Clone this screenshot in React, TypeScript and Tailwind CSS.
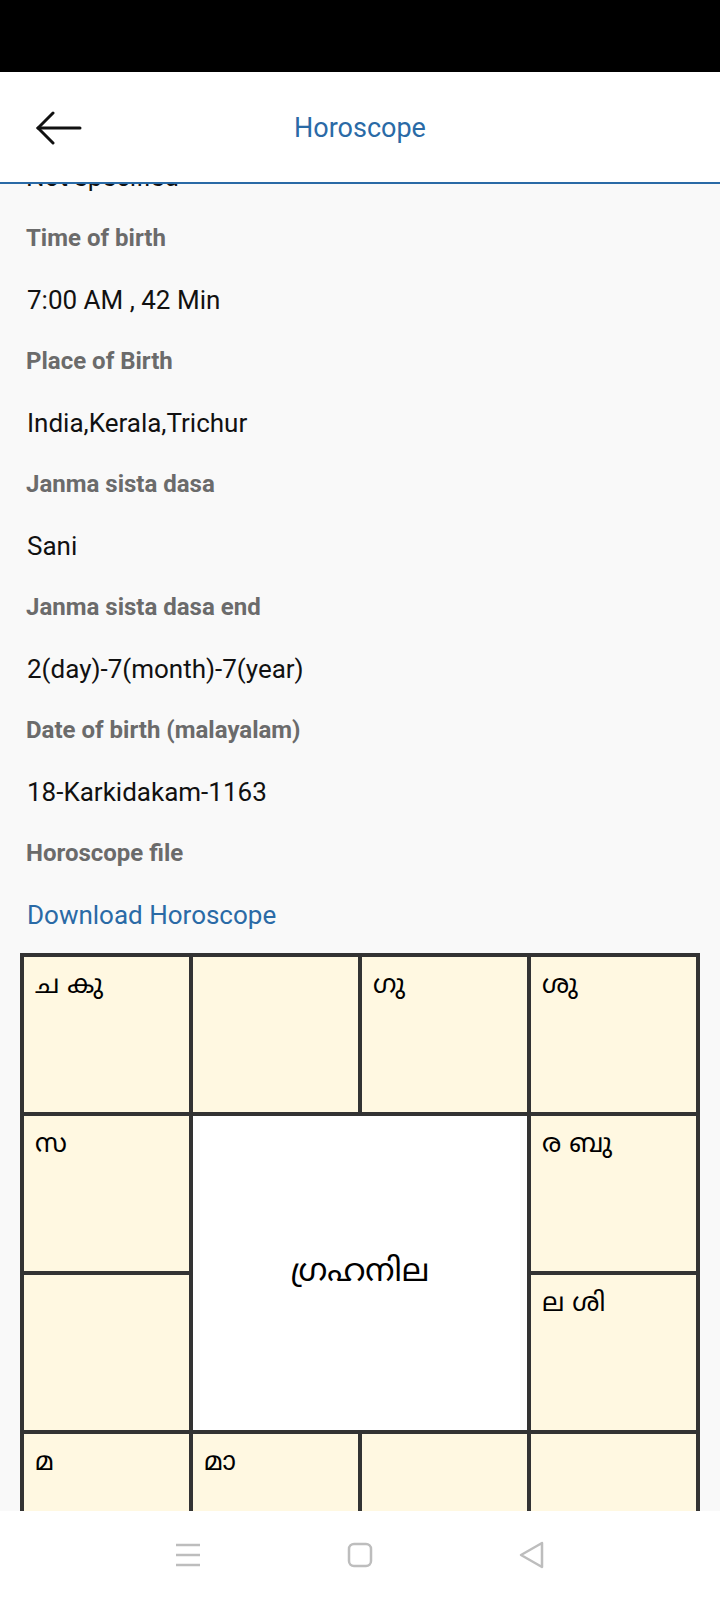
import React from "react";

const details = [
  { label: "Time of birth", value: "7:00 AM , 42 Min" },
  { label: "Place of Birth", value: "India,Kerala,Trichur" },
  { label: "Janma sista dasa", value: "Sani" },
  { label: "Janma sista dasa end", value: "2(day)-7(month)-7(year)" },
  { label: "Date of birth (malayalam)", value: "18-Karkidakam-1163" },
];

const ml = { fontFamily: '"Noto Sans Malayalam", "Noto Sans", "DejaVu Sans", sans-serif' };

function Cell({ text }: { text?: string }) {
  return (
    <div className="h-[155px] bg-[#fff8e1] pl-[11px] pt-[13px] text-[26px] leading-[34px] text-black" style={ml}>
      {text}
    </div>
  );
}

export default function App() {
  return (
    <div className="flex h-[1600px] w-[720px] flex-col overflow-hidden bg-[#f9f9f9] font-['Roboto',sans-serif]">
      {/* status bar */}
      <div className="h-[72px] shrink-0 bg-black" />

      {/* header */}
      <div className="relative z-10 flex h-[112px] shrink-0 items-center border-b-2 border-[#2a6aa6] bg-white pt-[2px]">
        <button className="absolute left-[36px] top-[39px]">
          <svg width="46" height="34" viewBox="0 0 46 34" fill="none" stroke="#111" strokeWidth="3" strokeLinecap="round">
            <path d="M2 17 H44" />
            <path d="M17 2 L2 17 L17 32" strokeLinejoin="miter" />
          </svg>
        </button>
        <h1 className="w-full text-center text-[27px] font-normal text-[#2a6aa6]">Horoscope</h1>
      </div>

      {/* content */}
      <div className="flex-1 overflow-hidden">
        <div className="-mt-[38px] pl-[26px] text-[26px] leading-[62px] text-[#111]">Not specified</div>
        {details.map((d) => (
          <div key={d.label}>
            <div className="pl-[26px] text-[24px] font-bold leading-[61px] text-[#6b6b6b]">{d.label}</div>
            <div className="pl-[27px] text-[26px] leading-[62px] text-[#111]">{d.value}</div>
          </div>
        ))}
        <div className="pl-[26px] text-[24px] font-bold leading-[61px] text-[#6b6b6b]">Horoscope file</div>
        <div className="pl-[27px] text-[26px] leading-[62px] text-[#2a6aa6]">Download Horoscope</div>

        {/* rasi chart */}
        <div className="ml-[20px] mt-[7px] grid w-[680px] grid-cols-4 gap-[4px] bg-[#333] p-[4px]">
          <Cell text="ച കു" />
          <Cell />
          <Cell text="ഗു" />
          <Cell text="ശു" />
          <Cell text="സ" />
          <div
            className="col-span-2 row-span-2 flex items-center justify-center bg-white text-[32px] text-black"
            style={ml}
          >
            ഗ്രഹനില
          </div>
          <Cell text="ര ബു" />
          <Cell />
          <Cell text="ല ശി" />
          <Cell text="മ" />
          <Cell text="മാ" />
          <Cell />
          <Cell />
        </div>
      </div>

      {/* nav bar */}
      <div className="flex h-[89px] shrink-0 items-center justify-center gap-[146px] bg-white pb-[2px]">
        <svg width="26" height="24" viewBox="0 0 26 24" fill="none" stroke="#bdbdbd" strokeWidth="2.5">
          <path d="M1 2 H25" />
          <path d="M1 12 H25" />
          <path d="M1 22 H25" />
        </svg>
        <svg width="26" height="26" viewBox="0 0 26 26" fill="none" stroke="#bdbdbd" strokeWidth="2.5">
          <rect x="2" y="2" width="22" height="22" rx="5" />
        </svg>
        <svg width="26" height="28" viewBox="0 0 26 28" fill="none" stroke="#bdbdbd" strokeWidth="2.5" strokeLinejoin="round">
          <path d="M23 2 L2 14 L23 26 Z" />
        </svg>
      </div>
    </div>
  );
}
